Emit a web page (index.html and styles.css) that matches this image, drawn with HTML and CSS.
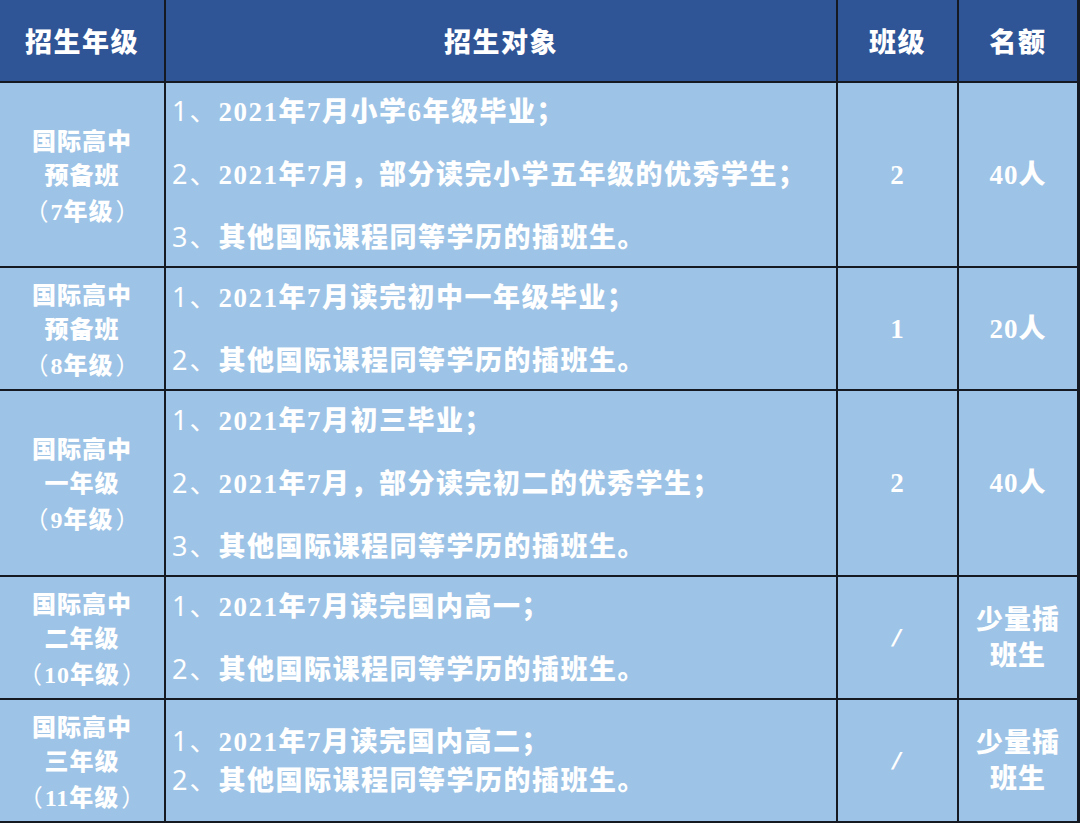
FILE: index.html
```html
<!DOCTYPE html>
<html lang="zh-CN">
<head>
<meta charset="utf-8">
<title>招生计划</title>
<link rel="stylesheet" href="styles.css">
</head>
<body>
<div class="table">
  <div class="cell head">招生年级</div>
  <div class="cell head">招生对象</div>
  <div class="cell head">班级</div>
  <div class="cell head">名额</div>

  <div class="cell grade"><div>国际高中<br>预备班<br><span class="p">（</span>7年级<span class="p r">）</span></div></div>
  <div class="cell target">
    <div><span class="n">1、</span>2021年7月小学6年级毕业；</div>
    <div><span class="n">2、</span>2021年7月，部分读完小学五年级的优秀学生；</div>
    <div><span class="n">3、</span>其他国际课程同等学历的插班生。</div>
  </div>
  <div class="cell num">2</div>
  <div class="cell num">40人</div>

  <div class="cell grade"><div>国际高中<br>预备班<br><span class="p">（</span>8年级<span class="p r">）</span></div></div>
  <div class="cell target">
    <div><span class="n">1、</span>2021年7月读完初中一年级毕业；</div>
    <div><span class="n">2、</span>其他国际课程同等学历的插班生。</div>
  </div>
  <div class="cell num">1</div>
  <div class="cell num">20人</div>

  <div class="cell grade"><div>国际高中<br>一年级<br><span class="p">（</span>9年级<span class="p r">）</span></div></div>
  <div class="cell target">
    <div><span class="n">1、</span>2021年7月初三毕业；</div>
    <div><span class="n">2、</span>2021年7月，部分读完初二的优秀学生；</div>
    <div><span class="n">3、</span>其他国际课程同等学历的插班生。</div>
  </div>
  <div class="cell num">2</div>
  <div class="cell num">40人</div>

  <div class="cell grade"><div>国际高中<br>二年级<br><span class="p">（</span>10年级<span class="p r">）</span></div></div>
  <div class="cell target">
    <div><span class="n">1、</span>2021年7月读完国内高一；</div>
    <div><span class="n">2、</span>其他国际课程同等学历的插班生。</div>
  </div>
  <div class="cell num"><span class="slash">/</span></div>
  <div class="cell num few">少量插班生</div>

  <div class="cell grade"><div>国际高中<br>三年级<br><span class="p">（</span>11年级<span class="p r">）</span></div></div>
  <div class="cell target tight">
    <div><span class="n">1、</span>2021年7月读完国内高二；</div>
    <div><span class="n">2、</span>其他国际课程同等学历的插班生。</div>
  </div>
  <div class="cell num"><span class="slash">/</span></div>
  <div class="cell num few">少量插班生</div>
</div>
</body>
</html>
```
FILE: styles.css
```css
html, body {
  margin: 0;
  padding: 0;
  background: #ffffff;
}

.table {
  width: 1079px;
  display: grid;
  grid-template-columns: 164px 670px 119px 118px;
  grid-template-rows: 81px 183px 121px 184px 121px 121px;
  gap: 2px;
  padding: 0 2px 2px 0;
  background: #151a22;
  font-family: "Liberation Serif", "Noto Sans CJK SC", serif;
  font-weight: 900;
  color: #ffffff;
}

.cell {
  background: #9dc3e6;
  display: flex;
  align-items: center;
  justify-content: center;
  text-align: center;
}

.head {
  background: #2f5597;
  font-size: 27px;
  letter-spacing: 1.5px;
}

.grade {
  font-size: 24px;
  letter-spacing: 1px;
  line-height: 34px;
  padding-top: 4px;
  white-space: nowrap;
}

.p {
  display: inline-block;
  width: 26px;
  font-family: "Noto Sans CJK SC", sans-serif;
  font-weight: 400;
  text-align: left;
  letter-spacing: 0;
  margin-left: -6px;
}

.p.r {
  text-align: right;
  margin-left: 0;
  margin-right: -6px;
}

.target {
  flex-direction: column;
  align-items: flex-start;
  justify-content: center;
  text-align: left;
  padding-left: 6px;
  font-size: 27px;
  letter-spacing: 1.5px;
  line-height: 61px;
}

.target.tight {
  line-height: 37px;
}

.n {
  font-family: "Noto Sans", "Noto Sans CJK SC", sans-serif;
  font-weight: 400;
  letter-spacing: 2px;
}

.num {
  font-size: 27px;
  letter-spacing: 1px;
  line-height: 36px;
}

.few {
  padding: 0 12px;
}

.slash {
  font-family: "DejaVu Sans", sans-serif;
  font-weight: 700;
  font-style: italic;
  font-size: 22px;
}
```
